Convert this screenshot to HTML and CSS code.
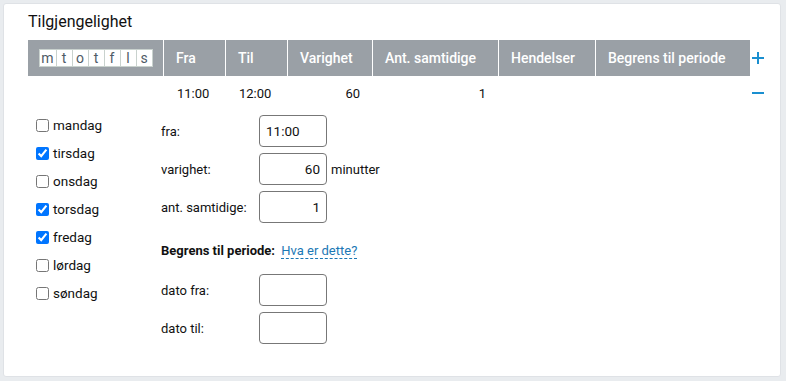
FILE: index.html
```html
<!DOCTYPE html>
<html lang="no">
<head>
<meta charset="utf-8">
<link rel="stylesheet" href="styles.css">
</head>
<body>
<div class="card">
  <div class="title">Tilgjengelighet</div>
  <table class="grid">
    <colgroup>
      <col class="c1"><col class="c2"><col class="c2"><col class="c4"><col class="c5"><col class="c6"><col class="c7"><col class="c8">
    </colgroup>
    <thead>
      <tr>
        <th class="days-cell">
          <div class="days"><span>m</span><span>t</span><span>o</span><span>t</span><span>f</span><span>l</span><span>s</span></div>
        </th>
        <th>Fra</th>
        <th>Til</th>
        <th>Varighet</th>
        <th>Ant. samtidige</th>
        <th>Hendelser</th>
        <th class="last">Begrens til periode</th>
        <td class="act">
          <svg width="12" height="12" viewBox="0 0 12 12"><path d="M6 0V12M0 6H12" stroke="#1a8fd0" stroke-width="2"/></svg>
        </td>
      </tr>
    </thead>
    <tbody>
      <tr class="vals">
        <td></td>
        <td>11:00</td>
        <td>12:00</td>
        <td class="num">60</td>
        <td class="num">1</td>
        <td></td>
        <td></td>
        <td class="act">
          <svg width="12" height="12" viewBox="0 0 12 12"><path d="M0 6H12" stroke="#1a8fd0" stroke-width="2"/></svg>
        </td>
      </tr>
    </tbody>
  </table>
  <div class="editor">
    <div class="daylist">
      <label class="day"><input type="checkbox"> mandag</label>
      <label class="day"><input type="checkbox" checked> tirsdag</label>
      <label class="day"><input type="checkbox"> onsdag</label>
      <label class="day"><input type="checkbox" checked> torsdag</label>
      <label class="day"><input type="checkbox" checked> fredag</label>
      <label class="day"><input type="checkbox"> lørdag</label>
      <label class="day"><input type="checkbox"> søndag</label>
    </div>
    <div class="form">
      <div class="row"><span class="lbl">fra:</span><input class="field" type="text" value="11:00"></div>
      <div class="row"><span class="lbl">varighet:</span><input class="field right" type="text" value="60"><span class="unit">minutter</span></div>
      <div class="row"><span class="lbl">ant. samtidige:</span><input class="field right" type="text" value="1"></div>
      <div class="period"><b>Begrens til periode:</b> <a class="help">Hva er dette?</a></div>
      <div class="row"><span class="lbl">dato fra:</span><input class="field" type="text" value=""></div>
      <div class="row"><span class="lbl">dato til:</span><input class="field" type="text" value=""></div>
    </div>
  </div>
</div>
</body>
</html>
```
FILE: styles.css
```css
html, body {
  margin: 0;
  padding: 0;
  background: #e9ecef;
  font-family: Roboto, "Liberation Sans", sans-serif;
  font-size: 13px;
  color: #212529;
}
.card {
  margin: 3px 0 0 3px;
  width: 778px;
  height: 374px;
  box-sizing: border-box;
  background: #fff;
  border: 1px solid #dfe2e6;
  border-radius: 3px;
  padding: 7px 0 0 24px;
}
.title {
  font-size: 16px;
  line-height: 21px;
  color: #111;
  margin-bottom: 8px;
}
.grid {
  border-collapse: separate;
  border-spacing: 0;
  table-layout: fixed;
  width: 742px;
}
.c1 { width: 136px; }
.c2 { width: 62px; }
.c4 { width: 85px; }
.c5 { width: 126px; }
.c6 { width: 97px; }
.c7 { width: 154px; }
.c8 { width: 20px; }
.grid th {
  box-sizing: border-box;
  background: #9aa0a6;
  color: #fff;
  font-size: 14px;
  font-weight: 500;
  text-align: left;
  height: 36px;
  padding: 0 0 0 12px;
  border-right: 1px solid #fff;
  white-space: nowrap;
  vertical-align: middle;
}
.grid th.last { border-right: 0; }
.grid th.days-cell { padding: 0; text-align: center; }
.days {
  display: inline-flex;
  vertical-align: middle;
  background: #fff;
  border: 1px solid #c9d2ce;
}
.days span {
  width: 15px;
  height: 16px;
  line-height: 16px;
  text-align: center;
  color: #4f5b67;
  font-weight: 400;
  font-size: 14px;
  border-left: 1px solid #c9d2ce;
}
.days span:first-child { border-left: 0; width: 16px; }
.act {
  padding: 0 0 0 2px;
  vertical-align: middle;
  line-height: 0;
}
.vals td {
  height: 34px;
  padding: 0 0 0 13px;
  vertical-align: middle;
  box-sizing: border-box;
  color: #111;
}
.vals td.num {
  text-align: right;
  padding: 0 13px 0 0;
}
.vals td.act { padding: 0 0 0 2px; }
.editor {
  display: flex;
}
.daylist {
  width: 133px;
  padding-left: 8px;
  box-sizing: border-box;
  display: flex;
  flex-direction: column;
  padding-top: 1px;
}
.day {
  display: flex;
  align-items: center;
  height: 28px;
  font-size: 13.5px;
  color: #111;
}
.day input {
  margin: 0 4px 0 0;
  width: 13px;
  height: 13px;
}
.form {
  padding-top: 5px;
  display: flex;
  flex-direction: column;
  color: #111;
}
.row {
  display: flex;
  align-items: center;
  height: 32px;
  margin-bottom: 6px;
}
.lbl {
  width: 98px;
}
.field {
  width: 68px;
  height: 32px;
  box-sizing: border-box;
  border: 1px solid #777;
  border-radius: 4px;
  padding: 0 6px;
  font-family: Roboto, "Liberation Sans", sans-serif;
  font-size: 13.5px;
  color: #111;
  margin: 0;
}
.field.right { text-align: right; }
.unit { margin-left: 4px; }
.period {
  height: 20px;
  line-height: 20px;
  margin: 12px 0 13px 0;
}
.period b { font-weight: 700; }
.help {
  color: #1b78b5;
  border-bottom: 1px dashed #1b78b5;
  margin-left: 3px;
  cursor: help;
}
```
